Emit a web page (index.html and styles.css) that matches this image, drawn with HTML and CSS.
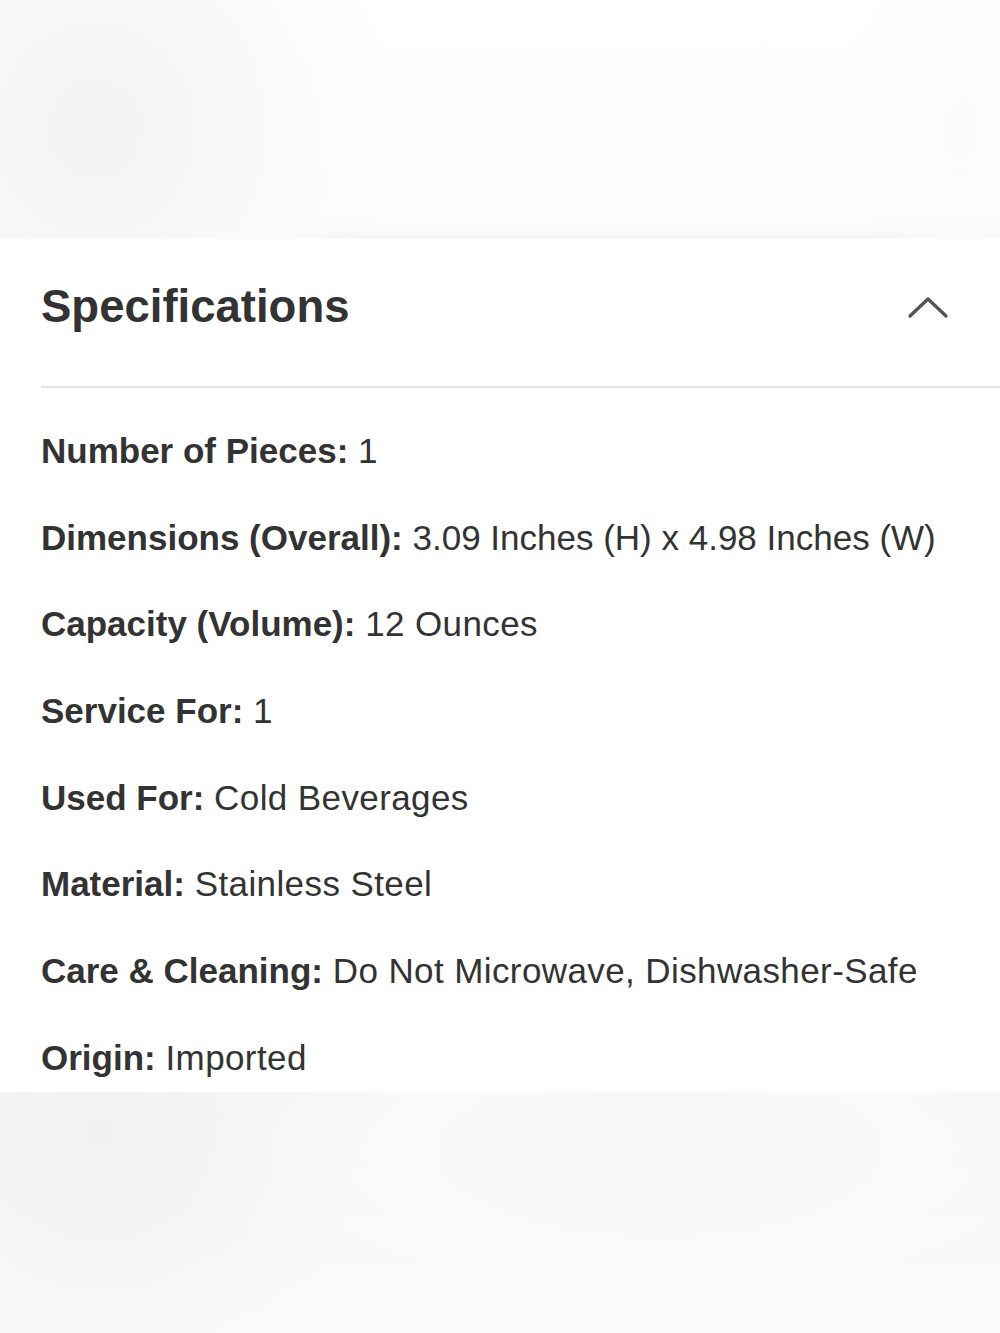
FILE: index.html
```html
<!DOCTYPE html>
<html lang="en">
<head>
    <meta charset="UTF-8">
    <meta name="viewport" content="width=device-width, initial-scale=1.0">
    <title>Specifications</title>
    <link rel="stylesheet" href="styles.css">
</head>
<body>

<div class="backdrop backdrop-top"></div>

<section class="panel">
    <header class="panel-header">
        <h2>Specifications</h2>
        <button class="toggle" aria-label="Collapse">
            <svg width="44" height="26" viewBox="0 0 44 26">
                <polyline points="4,21 22,4 40,21" fill="none" stroke="#555" stroke-width="3.4" stroke-linecap="round" stroke-linejoin="round"/>
            </svg>
        </button>
    </header>

    <ul class="specs">
        <li><b>Number of Pieces:</b> 1</li>
        <li><b>Dimensions (Overall):</b> 3.09 Inches (H) x 4.98 Inches (W)</li>
        <li><b>Capacity (Volume):</b> <span class="wide">12 Ounces</span></li>
        <li><b>Service For:</b> 1</li>
        <li><b>Used For:</b> <span class="wide">Cold Beverages</span></li>
        <li><b>Material:</b> <span class="wide">Stainless Steel</span></li>
        <li><b>Care &amp; Cleaning:</b> <span class="wide">Do Not Microwave, Dishwasher-Safe</span></li>
        <li><b>Origin:</b> <span class="wide">Imported</span></li>
    </ul>
</section>

<div class="backdrop backdrop-bottom"></div>

</body>
</html>
```

FILE: styles.css
```css
body {
    margin: 0;
    padding: 0;
    font-family: "Liberation Sans", Arial, sans-serif;
    color: #333;
    background-color: #fff;
}
.backdrop {
    width: 100%;
}
.backdrop-top {
    height: 239px;
    background:
        radial-gradient(ellipse 300px 320px at 95px 130px, #f3f3f3 0%, #f6f6f6 30%, #fafafa 60%, rgba(255,255,255,0) 100%),
        radial-gradient(ellipse 120px 200px at 960px 130px, #fbfbfb 0%, rgba(255,255,255,0) 100%),
        linear-gradient(to bottom, #fff 0%, #fdfdfd 90%, #f6f6f6 100%);
}
.backdrop-bottom {
    height: 241px;
    background:
        radial-gradient(ellipse 260px 260px at 100px 40px, #f1f1f1 0%, #f4f4f4 35%, rgba(248,248,248,0) 100%),
        radial-gradient(ellipse 520px 200px at 660px 60px, #f7f7f7 0%, #fafafa 50%, rgba(252,252,252,0) 100%),
        linear-gradient(to bottom, #f6f6f6 0%, #fbfbfb 100%);
}
.panel {
    padding-left: 41px;
}
.panel-header {
    display: flex;
    justify-content: space-between;
    align-items: center;
    padding: 41px 50px 52px 0;
    border-bottom: 2px solid #e4e4e4;
}
.panel-header h2 {
    margin: 0;
    font-size: 45.5px;
    line-height: 54px;
    font-weight: bold;
    color: #333;
}
.toggle {
    border: none;
    background: none;
    padding: 0;
    margin-top: 2px;
    cursor: pointer;
    display: flex;
}
.specs {
    list-style: none;
    margin: 0;
    padding: 43px 0 14px 0;
    display: flex;
    flex-direction: column;
    gap: 46.7px;
}
.specs li {
    font-size: 35px;
    line-height: 40px;
    white-space: nowrap;
}
.specs b {
    font-weight: bold;
}
.specs .wide {
    letter-spacing: 0.4px;
}
```
